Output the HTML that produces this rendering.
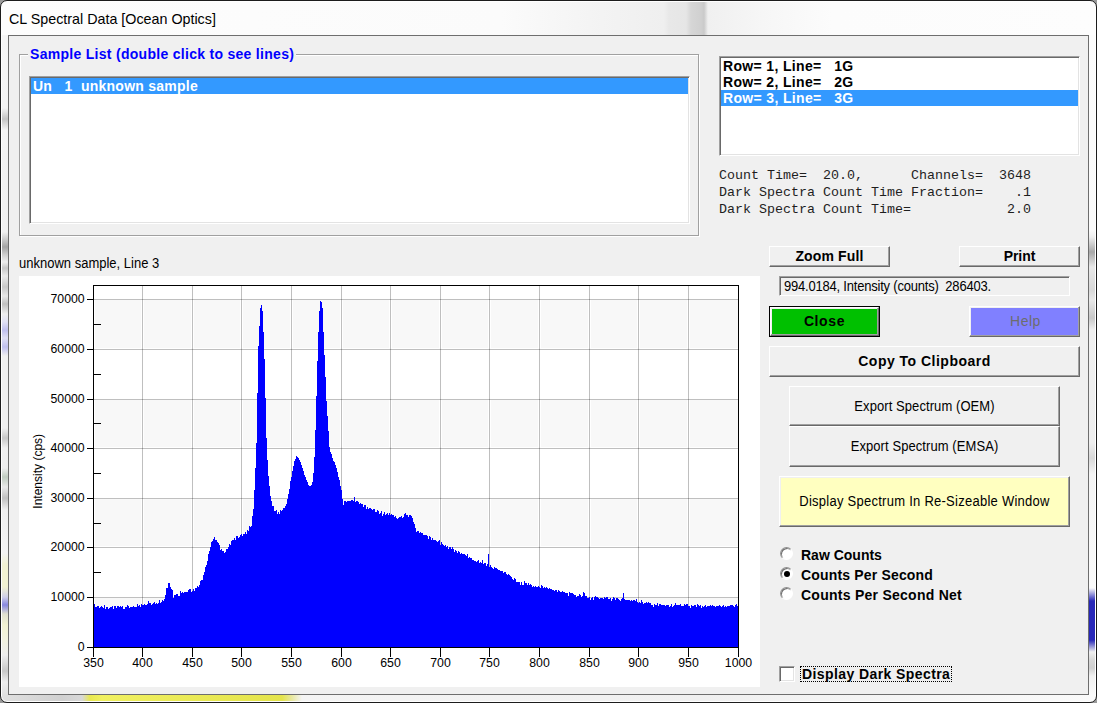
<!DOCTYPE html>
<html><head><meta charset="utf-8"><title>CL Spectral Data [Ocean Optics]</title>
<style>
html,body{margin:0;padding:0;}
body{width:1097px;height:703px;overflow:hidden;background:#9a9a9a;font-family:"Liberation Sans",sans-serif;font-size:13px;color:#000;position:relative;}
.abs{position:absolute;box-sizing:border-box;}
#win{left:0;top:0;width:1097px;height:703px;border:1px solid #1c1c1c;border-radius:7px;background:#f6f6f6;box-shadow:inset 0 0 0 1px #fff;}
#client{left:8px;top:35px;width:1081px;height:660px;background:#f0f0f0;border:1px solid #6e6e6e;}
#title{left:9px;top:9px;font-size:14.3px;line-height:20px;white-space:nowrap;}
#tbar{left:2px;top:2px;width:1093px;height:33px;border-radius:5px 5px 0 0;background:linear-gradient(90deg,#fdfdfd 0,#fbfbfb 500px,#f3f3f3 600px,#efefef 662px,#e8e8e8 667px,#e6e6e6 684px,#d6d6d6 689px,#d0d0d0 699px,#cacaca 702px,#f0f0f0 706px,#f6f6f6 760px,#fcfcfc 830px,#fdfdfd 1093px);}
#lstrip{left:2px;top:35px;width:6px;height:660px;background:linear-gradient(180deg,#f6f6f6 0,#f4f4f4 73px,#c4c4c4 84px,#f4f4f4 95px,#f0f0f0 197px,#c8c8c8 205px,#a4a4a4 212px,#d0d0d0 220px,#eee 227px,#c8c8c8 233px,#eaeaea 241px,#c8c8c8 252px,#e8e8e8 261px,#c0c0c0 269px,#eee 279px,#e0e0f4 287px,#c0c0ee 295px,#e0e0f4 303px,#c0c0ee 312px,#f0f0f0 321px,#f0f0f0 393px,#c8c8c8 403px,#f0f0f0 413px,#eee 433px,#c0ccc0 442px,#e8e8e8 452px,#c0c0c0 463px,#f0f0f0 475px,#f4f4f4 518px,#f2f2d2 530px,#f2f2d2 552px,#d0d0e8 562px,#8888e0 570px,#e0e0d0 579px,#f2f2d2 590px,#f2f2e0 606px,#eee 620px,#c8c8c8 636px,#eee 647px,#e0e0e0 660px);}
#rstrip{left:1089px;top:35px;width:6px;height:660px;background:linear-gradient(180deg,#fcfcfc 0,#fafafa 195px,#eee 202px,#a8a8a8 217px,#e8e8e8 232px,#d8d8d8 255px,#e8e8e8 265px,#c8c8c8 283px,#f0f0f0 295px,#eee 408px,#d8d8d8 423px,#f4f4f4 439px,#fafafa 553px,#2828b8 566px,#2828b8 605px,#f0f0f0 617px,#d8d8d8 625px,#d0d0d0 633px,#f0f0f0 641px,#fafafa 660px);}
#bstrip{left:2px;top:695px;width:1093px;height:6px;border-radius:0 0 5px 5px;background:linear-gradient(90deg,#e0e0e0 0,#d0d0d0 60px,#d8d8d8 80px,#e8e850 88px,#f0f060 100px,#e4e44c 280px,#e8e8a0 290px,#f4f4f4 300px,#f0f0f0 700px,#fafafa 1093px);}
.sy{display:inline-block;transform:scaleY(1.075);transform-origin:50% 75%;}
.b{font-weight:bold;font-size:14px;white-space:pre;}
.btn{background:#f0f0f0;border:1px solid;border-color:#fff #696969 #696969 #fff;box-shadow:inset -1px -1px 0 #a0a0a0, inset 1px 1px 0 #f0f0f0;text-align:center;white-space:nowrap;}
.sunk{border:1px solid;border-color:#a0a0a0 #fff #fff #a0a0a0;box-shadow:inset 1px 1px 0 #696969, inset -1px -1px 0 #e3e3e3;background:#fff;}
.tl{font-family:"Liberation Sans",sans-serif;font-size:12.3px;fill:#000;}
.mono{font-family:"Liberation Mono",monospace;font-size:13.33px;white-space:pre;line-height:17px;color:#1e1e1e;}
.row{position:absolute;left:2px;right:2px;height:16px;line-height:16px;white-space:pre;font-weight:bold;font-size:14px;letter-spacing:0.34px;padding-left:2px;}
.sel{background:#3399ff;color:#fff;}
.radio{width:13px;height:13px;border-radius:50%;border:1px solid;border-color:#909090 #fff #fff #909090;background:#fff;box-shadow:inset 1px 1px 0 #707070;transform:rotate(0deg);}
</style></head><body>
<div id="win" class="abs"></div>
<div class="abs" id="tbar"></div>
<div class="abs" id="lstrip"></div>
<div class="abs" id="rstrip"></div>
<div class="abs" id="bstrip"></div>
<div id="title" class="abs">CL Spectral Data [Ocean Optics]</div>
<div id="client" class="abs"></div>

<!-- group box -->
<div class="abs" style="left:19px;top:54px;width:680px;height:182px;border:1px solid #a0a0a0;box-shadow:1px 1px 0 #fff, inset 1px 1px 0 #fff;"></div>
<div class="abs b" style="left:28px;top:46px;height:16px;line-height:16px;background:#f0f0f0;padding:0 2px;color:#0000ff;letter-spacing:0.29px;" id="gbl">Sample List (double click to see lines)</div>
<div class="abs sunk" style="left:29px;top:76px;width:661px;height:148px;">
  <div class="row sel" style="top:1px;left:1px;right:1px;letter-spacing:0.25px;">Un   1  unknown sample</div>
</div>

<!-- right list -->
<div class="abs sunk" style="left:719px;top:56px;width:361px;height:100px;">
  <div class="row" style="top:1px;left:1px;right:1px;">Row= 1, Line=   1G</div>
  <div class="row" style="top:17px;left:1px;right:1px;">Row= 2, Line=   2G</div>
  <div class="row sel" style="top:33px;left:1px;right:1px;">Row= 3, Line=   3G</div>
</div>
<div class="abs mono" style="left:719px;top:167px;">Count Time=  20.0,      Channels=  3648
Dark Spectra Count Time Fraction=    .1
Dark Spectra Count Time=            2.0</div>

<div class="abs" style="left:19px;top:256px;line-height:16px;font-size:13px;white-space:nowrap;"><span class="sy">unknown sample, Line 3</span></div>
<div class="abs" style="left:19px;top:276px;width:741px;height:411px;"><svg id="chart" width="741" height="411" viewBox="19 276 741 411" shape-rendering="crispEdges">
<rect x="19" y="276" width="741" height="411" fill="#fff"/>
<rect x="95" y="300" width="46" height="48" fill="#f8f8f8"/>
<rect x="144" y="300" width="47" height="48" fill="#f8f8f8"/>
<rect x="194" y="300" width="46" height="48" fill="#f8f8f8"/>
<rect x="243" y="300" width="47" height="48" fill="#f8f8f8"/>
<rect x="293" y="300" width="47" height="48" fill="#f8f8f8"/>
<rect x="343" y="300" width="46" height="48" fill="#f8f8f8"/>
<rect x="392" y="300" width="47" height="48" fill="#f8f8f8"/>
<rect x="442" y="300" width="46" height="48" fill="#f8f8f8"/>
<rect x="491" y="300" width="47" height="48" fill="#f8f8f8"/>
<rect x="541" y="300" width="47" height="48" fill="#f8f8f8"/>
<rect x="591" y="300" width="46" height="48" fill="#f8f8f8"/>
<rect x="640" y="300" width="47" height="48" fill="#f8f8f8"/>
<rect x="690" y="300" width="48" height="48" fill="#f8f8f8"/>
<rect x="95" y="400" width="46" height="47" fill="#f8f8f8"/>
<rect x="144" y="400" width="47" height="47" fill="#f8f8f8"/>
<rect x="194" y="400" width="46" height="47" fill="#f8f8f8"/>
<rect x="243" y="400" width="47" height="47" fill="#f8f8f8"/>
<rect x="293" y="400" width="47" height="47" fill="#f8f8f8"/>
<rect x="343" y="400" width="46" height="47" fill="#f8f8f8"/>
<rect x="392" y="400" width="47" height="47" fill="#f8f8f8"/>
<rect x="442" y="400" width="46" height="47" fill="#f8f8f8"/>
<rect x="491" y="400" width="47" height="47" fill="#f8f8f8"/>
<rect x="541" y="400" width="47" height="47" fill="#f8f8f8"/>
<rect x="591" y="400" width="46" height="47" fill="#f8f8f8"/>
<rect x="640" y="400" width="47" height="47" fill="#f8f8f8"/>
<rect x="690" y="400" width="48" height="47" fill="#f8f8f8"/>
<rect x="95" y="499" width="46" height="47" fill="#f8f8f8"/>
<rect x="144" y="499" width="47" height="47" fill="#f8f8f8"/>
<rect x="194" y="499" width="46" height="47" fill="#f8f8f8"/>
<rect x="243" y="499" width="47" height="47" fill="#f8f8f8"/>
<rect x="293" y="499" width="47" height="47" fill="#f8f8f8"/>
<rect x="343" y="499" width="46" height="47" fill="#f8f8f8"/>
<rect x="392" y="499" width="47" height="47" fill="#f8f8f8"/>
<rect x="442" y="499" width="46" height="47" fill="#f8f8f8"/>
<rect x="491" y="499" width="47" height="47" fill="#f8f8f8"/>
<rect x="541" y="499" width="47" height="47" fill="#f8f8f8"/>
<rect x="591" y="499" width="46" height="47" fill="#f8f8f8"/>
<rect x="640" y="499" width="47" height="47" fill="#f8f8f8"/>
<rect x="690" y="499" width="48" height="47" fill="#f8f8f8"/>
<rect x="95" y="598" width="46" height="48" fill="#f8f8f8"/>
<rect x="144" y="598" width="47" height="48" fill="#f8f8f8"/>
<rect x="194" y="598" width="46" height="48" fill="#f8f8f8"/>
<rect x="243" y="598" width="47" height="48" fill="#f8f8f8"/>
<rect x="293" y="598" width="47" height="48" fill="#f8f8f8"/>
<rect x="343" y="598" width="46" height="48" fill="#f8f8f8"/>
<rect x="392" y="598" width="47" height="48" fill="#f8f8f8"/>
<rect x="442" y="598" width="46" height="48" fill="#f8f8f8"/>
<rect x="491" y="598" width="47" height="48" fill="#f8f8f8"/>
<rect x="541" y="598" width="47" height="48" fill="#f8f8f8"/>
<rect x="591" y="598" width="46" height="48" fill="#f8f8f8"/>
<rect x="640" y="598" width="47" height="48" fill="#f8f8f8"/>
<rect x="690" y="598" width="48" height="48" fill="#f8f8f8"/>
<rect x="94" y="597" width="644" height="1" fill="#000" fill-opacity="0.25"/>
<rect x="94" y="547" width="644" height="1" fill="#000" fill-opacity="0.25"/>
<rect x="94" y="498" width="644" height="1" fill="#000" fill-opacity="0.25"/>
<rect x="94" y="448" width="644" height="1" fill="#000" fill-opacity="0.25"/>
<rect x="94" y="399" width="644" height="1" fill="#000" fill-opacity="0.25"/>
<rect x="94" y="349" width="644" height="1" fill="#000" fill-opacity="0.25"/>
<rect x="94" y="299" width="644" height="1" fill="#000" fill-opacity="0.25"/>
<rect x="142" y="286" width="1" height="361" fill="#000" fill-opacity="0.25"/>
<rect x="192" y="286" width="1" height="361" fill="#000" fill-opacity="0.25"/>
<rect x="241" y="286" width="1" height="361" fill="#000" fill-opacity="0.25"/>
<rect x="291" y="286" width="1" height="361" fill="#000" fill-opacity="0.25"/>
<rect x="341" y="286" width="1" height="361" fill="#000" fill-opacity="0.25"/>
<rect x="390" y="286" width="1" height="361" fill="#000" fill-opacity="0.25"/>
<rect x="440" y="286" width="1" height="361" fill="#000" fill-opacity="0.25"/>
<rect x="489" y="286" width="1" height="361" fill="#000" fill-opacity="0.25"/>
<rect x="539" y="286" width="1" height="361" fill="#000" fill-opacity="0.25"/>
<rect x="589" y="286" width="1" height="361" fill="#000" fill-opacity="0.25"/>
<rect x="638" y="286" width="1" height="361" fill="#000" fill-opacity="0.25"/>
<rect x="688" y="286" width="1" height="361" fill="#000" fill-opacity="0.25"/>
<rect x="94" y="622" width="7" height="1" fill="#000"/>
<rect x="94" y="572" width="7" height="1" fill="#000"/>
<rect x="94" y="523" width="7" height="1" fill="#000"/>
<rect x="94" y="473" width="7" height="1" fill="#000"/>
<rect x="94" y="423" width="7" height="1" fill="#000"/>
<rect x="94" y="374" width="7" height="1" fill="#000"/>
<rect x="94" y="324" width="7" height="1" fill="#000"/>
<path d="M94,647V604h1V607h1V607h1V606h1V605.5h1V608h1V606.5h1V605.5h1V607h1V608h1V605h1V608.5h1V606.5h1V607h1V608.5h1V608h1V606.5h1V606.5h1V606h1V609h1V606h1V605.5h1V607.5h1V605.5h1V605.5h1V607h1V606h1V607h1V606h1V609h1V608.5h1V607h1V607h1V605h1V606h1V607.5h1V606.5h1V606.5h1V606.5h1V605.5h1V606.5h1V606.5h1V606.5h1V604h1V605.5h1V605h1V606.5h1V604h1V604.5h1V604.5h1V604h1V604.5h1V605h1V603.5h1V601h1V602.5h1V603h1V605h1V604h1V602.5h1V601.5h1V603.5h1V602.5h1V604h1V602.5h1V600h1V602.5h1V601.5h1V600h1V601h1V598.5h1V594.5h1V587.5h1V587.5h1V583h1V583h1V586.5h1V589h1V590h1V598h1V594.5h1V594.5h1V594h1V594h1V595.5h1V595.5h1V591h1V592.5h1V592h1V592.5h1V591.5h1V592h1V591.5h1V592h1V590h1V589h1V589h1V592h1V590.5h1V588.5h1V590.5h1V587.5h1V588h1V585.5h1V586.5h1V584.5h1V580.5h1V580h1V580h1V575h1V571.5h1V566.5h1V565h1V561h1V554h1V551h1V546.5h1V542h1V540.5h1V539h1V536.5h1V539.5h1V539.5h1V541.5h1V542.5h1V544.5h1V549.5h1V549h1V551h1V551h1V553h1V551.5h1V548.5h1V549h1V546.5h1V543.5h1V544.5h1V541h1V540h1V540h1V538h1V539.5h1V536h1V536h1V537.5h1V537h1V534.5h1V534h1V535.5h1V534h1V533.5h1V532h1V534h1V529.5h1V530.5h1V526h1V526.5h1V525.5h1V515.5h1V508.5h1V489.5h1V467.5h1V443h1V393h1V345.5h1V326h1V308h1V304.5h1V310.5h1V331.5h1V358.5h1V397.5h1V438h1V460h1V475.5h1V486h1V496h1V500.5h1V506h1V506h1V510.5h1V510.5h1V509.5h1V514h1V511.5h1V513.5h1V509.5h1V510.5h1V510h1V508h1V508h1V506h1V504h1V499h1V493.5h1V488.5h1V480.5h1V476.5h1V471h1V466h1V461h1V458.5h1V456h1V456.5h1V457.5h1V459.5h1V461.5h1V465h1V467.5h1V470.5h1V475h1V476.5h1V480h1V481.5h1V484.5h1V485.5h1V486h1V484.5h1V481.5h1V473h1V457h1V429.5h1V396h1V361h1V331.5h1V311h1V301h1V302h1V307.5h1V331.5h1V355h1V377h1V401h1V415.5h1V431h1V446.5h1V451.5h1V454h1V458h1V460.5h1V462h1V464.5h1V467.5h1V472h1V476.5h1V480h1V486h1V489.5h1V499h1V504.5h1V501h1V500.5h1V501.5h1V500.5h1V500.5h1V500.5h1V500.5h1V500h1V500h1V501h1V497h1V501.5h1V501h1V501h1V501.5h1V503.5h1V502.5h1V504h1V504h1V506.5h1V504.5h1V505h1V508.5h1V506.5h1V508.5h1V508h1V508h1V509h1V509.5h1V509h1V509h1V511.5h1V512h1V510h1V511h1V514h1V512.5h1V510.5h1V515.5h1V513.5h1V512h1V514.5h1V514h1V513h1V515h1V513h1V515h1V513.5h1V514.5h1V514.5h1V516.5h1V516h1V518h1V518.5h1V518h1V516.5h1V517h1V516h1V517.5h1V516.5h1V513.5h1V513h1V514.5h1V515h1V516.5h1V515h1V515h1V516h1V518h1V521.5h1V524h1V527.5h1V531.5h1V531h1V531h1V532.5h1V532h1V533h1V533h1V535h1V535h1V535h1V535h1V536h1V539h1V536h1V537h1V540h1V538h1V540h1V539.5h1V540h1V541h1V541.5h1V540.5h1V540h1V544.5h1V541.5h1V543.5h1V545h1V546h1V545h1V546.5h1V546h1V549h1V546.5h1V547h1V548.5h1V546.5h1V548.5h1V551.5h1V549.5h1V550.5h1V553h1V550.5h1V552h1V553.5h1V553h1V554h1V553.5h1V553.5h1V555h1V555.5h1V553.5h1V557.5h1V557h1V558h1V558h1V560h1V560h1V561h1V561h1V561.5h1V560.5h1V559.5h1V563h1V561.5h1V562.5h1V559.5h1V564h1V563h1V562.5h1V566h1V563.5h1V553.5h1V566.5h1V564.5h1V567h1V567.5h1V568.5h1V567h1V568h1V568h1V568.5h1V569.5h1V569.5h1V570.5h1V570.5h1V571h1V572.5h1V572h1V571.5h1V574h1V574.5h1V573.5h1V575h1V575.5h1V577h1V578.5h1V579.5h1V578h1V579h1V582h1V581.5h1V581.5h1V581.5h1V584.5h1V582h1V584.5h1V584.5h1V581h1V582.5h1V583h1V584.5h1V583h1V584.5h1V584h1V584.5h1V587h1V586h1V586.5h1V586h1V587h1V587h1V586h1V587h1V588h1V585h1V585.5h1V588h1V587h1V588h1V586.5h1V588h1V589h1V588h1V589h1V589h1V589.5h1V590h1V591h1V589.5h1V589.5h1V591.5h1V589.5h1V590.5h1V592h1V591.5h1V591h1V591.5h1V592h1V592.5h1V593h1V593h1V596h1V592h1V593h1V593h1V593h1V593.5h1V594.5h1V595h1V596.5h1V596h1V596h1V594h1V595h1V597h1V596h1V592h1V593h1V595.5h1V596h1V597.5h1V598h1V597h1V600h1V598h1V597h1V599.5h1V597h1V596h1V597h1V597h1V598h1V598.5h1V598h1V598h1V598h1V598.5h1V597h1V598h1V597h1V597h1V598.5h1V599h1V598h1V601h1V598.5h1V597h1V598h1V599.5h1V598h1V598h1V598.5h1V599.5h1V601h1V599h1V598h1V593h1V598.5h1V599.5h1V599.5h1V600h1V600h1V599.5h1V600.5h1V599.5h1V601h1V600h1V599.5h1V601h1V598.5h1V602h1V602.5h1V601.5h1V602.5h1V600h1V602h1V603.5h1V603h1V602.5h1V601.5h1V603h1V601.5h1V602.5h1V602.5h1V604.5h1V604.5h1V606.5h1V603.5h1V605h1V604.5h1V602.5h1V605.5h1V603.5h1V603.5h1V604.5h1V605h1V605h1V605h1V605.5h1V604.5h1V605h1V605h1V606.5h1V605.5h1V604h1V607h1V605.5h1V605h1V602.5h1V605h1V605h1V605h1V604.5h1V604h1V605.5h1V605.5h1V606h1V604h1V605h1V603.5h1V604h1V606h1V606h1V607.5h1V604.5h1V606h1V606h1V605h1V605h1V607h1V604h1V604.5h1V606h1V605h1V607.5h1V605.5h1V606.5h1V606h1V605h1V606.5h1V605.5h1V605.5h1V605.5h1V604.5h1V606h1V604.5h1V605.5h1V605.5h1V606.5h1V606h1V605.5h1V606h1V605h1V605.5h1V606.5h1V606h1V604.5h1V606.5h1V605.5h1V606.5h1V605.5h1V605.5h1V605.5h1V604.5h1V605h1V605h1V606h1V606.5h1V604.5h1V603.5h1V605.5h1V647Z" fill="#0000ff"/>
<rect x="93" y="285" width="646" height="1" fill="#000"/>
<rect x="93" y="285" width="1" height="363" fill="#000"/>
<rect x="738" y="285" width="1" height="363" fill="#000"/>
<rect x="87" y="647" width="652" height="1" fill="#000"/>
<rect x="87" y="647" width="6" height="1" fill="#000"/>
<text x="84.7" y="650.7" text-anchor="end" class="tl">0</text>
<rect x="87" y="597" width="6" height="1" fill="#000"/>
<text x="84.7" y="600.7" text-anchor="end" class="tl">10000</text>
<rect x="87" y="547" width="6" height="1" fill="#000"/>
<text x="84.7" y="550.7" text-anchor="end" class="tl">20000</text>
<rect x="87" y="498" width="6" height="1" fill="#000"/>
<text x="84.7" y="501.7" text-anchor="end" class="tl">30000</text>
<rect x="87" y="448" width="6" height="1" fill="#000"/>
<text x="84.7" y="451.7" text-anchor="end" class="tl">40000</text>
<rect x="87" y="399" width="6" height="1" fill="#000"/>
<text x="84.7" y="402.7" text-anchor="end" class="tl">50000</text>
<rect x="87" y="349" width="6" height="1" fill="#000"/>
<text x="84.7" y="352.7" text-anchor="end" class="tl">60000</text>
<rect x="87" y="299" width="6" height="1" fill="#000"/>
<text x="84.7" y="302.7" text-anchor="end" class="tl">70000</text>
<rect x="93" y="648" width="1" height="9" fill="#000"/>
<text x="93.5" y="667" text-anchor="middle" class="tl">350</text>
<rect x="142" y="648" width="1" height="9" fill="#000"/>
<text x="142.5" y="667" text-anchor="middle" class="tl">400</text>
<rect x="192" y="648" width="1" height="9" fill="#000"/>
<text x="192.5" y="667" text-anchor="middle" class="tl">450</text>
<rect x="241" y="648" width="1" height="9" fill="#000"/>
<text x="241.5" y="667" text-anchor="middle" class="tl">500</text>
<rect x="291" y="648" width="1" height="9" fill="#000"/>
<text x="291.5" y="667" text-anchor="middle" class="tl">550</text>
<rect x="341" y="648" width="1" height="9" fill="#000"/>
<text x="341.5" y="667" text-anchor="middle" class="tl">600</text>
<rect x="390" y="648" width="1" height="9" fill="#000"/>
<text x="390.5" y="667" text-anchor="middle" class="tl">650</text>
<rect x="440" y="648" width="1" height="9" fill="#000"/>
<text x="440.5" y="667" text-anchor="middle" class="tl">700</text>
<rect x="489" y="648" width="1" height="9" fill="#000"/>
<text x="489.5" y="667" text-anchor="middle" class="tl">750</text>
<rect x="539" y="648" width="1" height="9" fill="#000"/>
<text x="539.5" y="667" text-anchor="middle" class="tl">800</text>
<rect x="589" y="648" width="1" height="9" fill="#000"/>
<text x="589.5" y="667" text-anchor="middle" class="tl">850</text>
<rect x="638" y="648" width="1" height="9" fill="#000"/>
<text x="638.5" y="667" text-anchor="middle" class="tl">900</text>
<rect x="688" y="648" width="1" height="9" fill="#000"/>
<text x="688.5" y="667" text-anchor="middle" class="tl">950</text>
<rect x="738" y="648" width="1" height="9" fill="#000"/>
<text x="738.5" y="667" text-anchor="middle" class="tl">1000</text>
<text transform="translate(41.6,471.3) rotate(-90)" text-anchor="middle" class="tl" style="font-size:12px">Intensity (cps)</text>
</svg></div>

<!-- buttons -->
<div class="abs btn b" style="left:769px;top:246px;width:121px;height:21px;line-height:19px;letter-spacing:0.14px;">Zoom Full</div>
<div class="abs btn b" style="left:959px;top:246px;width:121px;height:21px;line-height:19px;letter-spacing:-0.07px;">Print</div>
<div class="abs" style="left:779px;top:276px;width:291px;height:20px;border:1px solid;border-color:#a0a0a0 #fff #fff #a0a0a0;box-shadow:inset 1px 1px 0 #696969;line-height:20px;padding-left:4px;font-size:13px;white-space:pre;letter-spacing:-0.21px;"><span class="sy">994.0184, Intensity (counts)  286403.</span></div>
<div class="abs" style="left:769px;top:306px;width:111px;height:31px;border:1px solid #000;"></div>
<div class="abs btn b" style="left:770px;top:307px;width:109px;height:29px;line-height:27px;background:#00c000;font-size:14px;letter-spacing:0.62px;">Close</div>
<div class="abs btn" style="left:969px;top:306px;width:111px;height:31px;line-height:29px;background:#8080ff;color:#6d6d6d;font-size:14px;letter-spacing:0.5px;padding-left:2px;"><span class="sy">Help</span></div>
<div class="abs btn b" style="left:769px;top:346px;width:311px;height:31px;line-height:29px;letter-spacing:0.49px;">Copy To Clipboard</div>
<div class="abs btn" style="left:789px;top:386px;width:271px;height:40px;line-height:40px;letter-spacing:0.08px;"><span class="sy">Export Spectrum (OEM)</span></div>
<div class="abs btn" style="left:789px;top:426px;width:271px;height:41px;line-height:40px;letter-spacing:0.08px;"><span class="sy">Export Spectrum (EMSA)</span></div>
<div class="abs btn" style="left:779px;top:476px;width:291px;height:51px;line-height:52px;background:#ffffc0;letter-spacing:0.26px;"><span class="sy">Display Spectrum In Re-Sizeable Window</span></div>

<div class="abs radio" style="left:780px;top:547px;"></div>
<div class="abs radio" style="left:780px;top:567px;"></div>
<div class="abs radio" style="left:780px;top:587px;"></div>
<div class="abs" style="left:784px;top:571px;width:6px;height:6px;border-radius:50%;background:#000;"></div>
<div class="abs b" style="left:801px;top:547px;line-height:16px;letter-spacing:0px;">Raw Counts</div>
<div class="abs b" style="left:801px;top:567px;line-height:16px;letter-spacing:0.17px;">Counts Per Second</div>
<div class="abs b" style="left:801px;top:587px;line-height:16px;letter-spacing:0.26px;">Counts Per Second Net</div>

<div class="abs" style="left:779px;top:666px;width:16px;height:16px;border:1px solid;border-color:#a0a0a0 #fff #fff #a0a0a0;background:#fff;box-shadow:inset 1px 1px 0 #696969, inset -1px -1px 0 #e3e3e3;"></div>
<div class="abs b" style="left:800px;top:666px;width:152px;height:16px;line-height:14px;padding:0 1px;border:1px dotted #000;letter-spacing:0.41px;">Display Dark Spectra</div>
</body></html>
